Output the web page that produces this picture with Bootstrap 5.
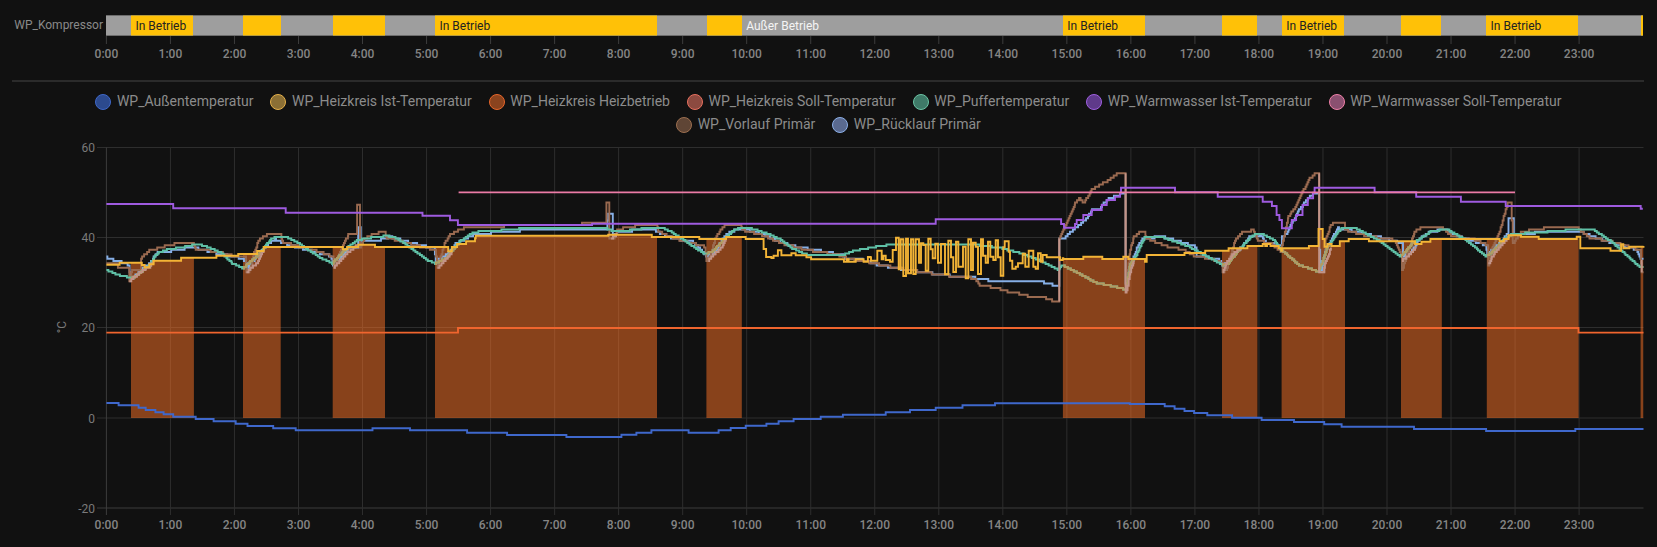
<!DOCTYPE html>
<html lang="de">
<head>
<meta charset="utf-8">
<title>WP Verlauf</title>
<link rel="stylesheet" href="https://cdn.jsdelivr.net/npm/bootstrap@5.3.0/dist/css/bootstrap.min.css">
<style>
html,body{background:#111;height:547px;overflow:hidden}
body{font-family:Roboto,"Liberation Sans",sans-serif;color:#8e8e8e}
.dash{padding-top:15px}
.tl-name{width:103px;font-size:12px;line-height:21px;color:#8a8a8a;white-space:nowrap}
.tl-track{margin-left:3.4px;width:1537.1px;height:21px;box-shadow:inset 0 0 0 1px #6a6a6a}
.seg{height:21px;font-size:12px;line-height:20px;padding-left:4.5px;overflow:hidden;white-space:nowrap;border-top:1px solid #7a7a7a;border-bottom:1px solid #7a7a7a}
.seg-on{background:#ffc107;color:#222;border-color:#b69a3a}
.seg-off{background:#9e9e9e;color:#f4f4f4;border-color:#6d6d6d}
.sep{margin:15px 13px 8px 12px;border:0;border-top:2px solid #2b2b2b;opacity:1}
.lg-box{margin:0 78px;column-gap:17px;height:46px}
.lg-key{height:23px;font-size:14px;line-height:23px;gap:5.5px;color:#8c8c8c;white-space:nowrap}
.lg-dot{width:16px;height:16px;border-radius:50%;border:1.5px solid;flex:none}
svg.plot{display:block}
svg text{font-family:Roboto,"Liberation Sans",sans-serif}
.xl{font-size:12px;font-weight:500;fill:#858585;text-anchor:middle}
.yl{font-size:12px;fill:#7a7a7a;text-anchor:end}
.gl{stroke:#2e2e2e;stroke-width:1}
.ax{stroke:#3d3d3d;stroke-width:1}
.sr{fill:none;stroke-width:1.9;stroke-linejoin:miter}
</style>
</head>
<body>
<div class="dash">
  <div class="d-flex align-items-center">
    <div class="tl-name text-end">WP_Kompressor</div>
    <div class="tl-track d-flex">
      <div class="seg seg-off" style="width:24.6px"></div>
      <div class="seg seg-on" style="width:62px">In Betrieb</div>
      <div class="seg seg-off" style="width:50.2px"></div>
      <div class="seg seg-on" style="width:37.8px"></div>
      <div class="seg seg-off" style="width:51.9px"></div>
      <div class="seg seg-on" style="width:52.6px"></div>
      <div class="seg seg-off" style="width:49.5px"></div>
      <div class="seg seg-on" style="width:221.8px">In Betrieb</div>
      <div class="seg seg-off" style="width:49.8px"></div>
      <div class="seg seg-on" style="width:35.2px"></div>
      <div class="seg seg-off" style="width:321.1px">Außer Betrieb</div>
      <div class="seg seg-on" style="width:82.2px">In Betrieb</div>
      <div class="seg seg-off" style="width:77.1px"></div>
      <div class="seg seg-on" style="width:35.2px"></div>
      <div class="seg seg-off" style="width:24.5px"></div>
      <div class="seg seg-on" style="width:62.5px">In Betrieb</div>
      <div class="seg seg-off" style="width:57.2px"></div>
      <div class="seg seg-on" style="width:39.8px"></div>
      <div class="seg seg-off" style="width:44.8px"></div>
      <div class="seg seg-on" style="width:92.3px">In Betrieb</div>
      <div class="seg seg-off" style="width:62.5px"></div>
      <div class="seg seg-on" style="width:2.5px;padding:0"></div>
    </div>
  </div>
  <svg id="tick" class="plot" width="1657" height="29" viewBox="0 36 1657 29"></svg>
  <hr class="sep">
  <div class="lg-box d-flex flex-wrap justify-content-center">
    <div class="lg-key d-flex align-items-center"><span class="lg-dot" style="background:#2c4a8e;border-color:#3f68c9"></span>WP_Außentemperatur</div>
    <div class="lg-key d-flex align-items-center"><span class="lg-dot" style="background:#8b6f35;border-color:#e5b04a"></span>WP_Heizkreis Ist-Temperatur</div>
    <div class="lg-key d-flex align-items-center"><span class="lg-dot" style="background:#8a431e;border-color:#e8662a"></span>WP_Heizkreis Heizbetrieb</div>
    <div class="lg-key d-flex align-items-center"><span class="lg-dot" style="background:#8c4a40;border-color:#e8705f"></span>WP_Heizkreis Soll-Temperatur</div>
    <div class="lg-key d-flex align-items-center"><span class="lg-dot" style="background:#3f7a68;border-color:#6bc4a5"></span>WP_Puffertemperatur</div>
    <div class="lg-key d-flex align-items-center"><span class="lg-dot" style="background:#5f3a8a;border-color:#9f5fe0"></span>WP_Warmwasser Ist-Temperatur</div>
    <div class="lg-key d-flex align-items-center"><span class="lg-dot" style="background:#8a5070;border-color:#f080a8"></span>WP_Warmwasser Soll-Temperatur</div>
    <div class="lg-key d-flex align-items-center"><span class="lg-dot" style="background:#5f4535;border-color:#9c6f50"></span>WP_Vorlauf Primär</div>
    <div class="lg-key d-flex align-items-center"><span class="lg-dot" style="background:#5a6a90;border-color:#8cb0e8"></span>WP_Rücklauf Primär</div>
  </div>
  <svg id="plot" class="plot" width="1657" height="411" viewBox="0 136 1657 411"></svg>
</div>
<script src="https://cdn.jsdelivr.net/npm/bootstrap@5.3.0/dist/js/bootstrap.bundle.min.js"></script>
<script>
const P={A:[0,2.8,170],B:[560,2.8,170],C:[1100,2.815,150],N:[870,3,225],Z:[1040,3,155],D:[0,2.8,370],E:[560,2.8,390],F:[1100,2.815,370]};
function pts(list){let o=[];for(let i=0;i<list.length;i+=2){const p=P[list[i]];list[i+1].trim().split(/\s+/).forEach(s=>{const [a,b]=s.split(',').map(Number);o.push([+(p[0]+a/p[1]).toFixed(1),+(p[2]+b/3).toFixed(1)])})}return o}
function step(p){let d='M'+p[0][0]+' '+p[0][1];for(let i=1;i<p.length;i++)d+='H'+p[i][0]+'V'+p[i][1];return d}
function stair(p,lv){let ly=Math.round(p[0][1]/lv)*lv,d='M'+p[0][0]+' '+ly;for(let i=1;i<p.length;i++){const a=p[i-1],b=p[i];if(b[0]<=a[0]+.5){ly=Math.round(b[1]/lv)*lv;d+='V'+ly;continue}
for(let x=a[0]+1;x<b[0];x+=1){const y=a[1]+(b[1]-a[1])*(x-a[0])/(b[0]-a[0]),r=Math.round(y/lv)*lv;if(r!==ly){d+='H'+x.toFixed(1)+'V'+r;ly=r}}
const r=Math.round(b[1]/lv)*lv;d+='H'+b[0];if(r!==ly){d+='V'+r;ly=r}}return d}

const yellow=pts(['A','298,284 335,278 397,285 405,292 418,283 430,272 507,263 606,257 667,252 720,243 738,231 960,238 972,231 1003,224 1050,231 1255,244 1265,231 1280,222 1305,214 1330,205 1332,197 1568,197',
'B','135,194 257,201 390,207 465,201 520,207 570,237 577,261 592,264 598,257 610,241 620,256 648,250 660,256 690,262 703,268 795,275 803,268 808,275 828,268 850,275 862,261',
'N','0,97 3,97 3,107 22,107 22,77 35,77 35,103 40,103 40,92 47,92 47,105 60,105 60,110 68,110 68,75 78,75 78,38 86,38 86,133 92,133 92,43 100,43 100,153 108,153 108,41 114,41 114,145 123,145 123,43 130,43 130,147 137,147 137,43 147,43 147,113 153,113 153,55 160,55 160,60 167,60 167,137 175,137 175,41 182,41 182,73 188,73 188,100 196,100 196,56 204,56 204,113 213,113 213,57 225,57 225,148 235,148 235,47 243,47 243,97 250,97 250,141 258,141 258,50 265,50 265,125 279,125 279,65 287,65 287,160 295,160 295,43 303,43 303,135 309,135 309,53 317,53 317,65 324,65 324,147 333,147 333,43 339,43 339,92 347,92 347,113 354,113 354,50 361,50 361,95 370,95 370,105 377,105 377,46 384,46 384,97 392,97 392,152 400,152 400,67 404,67 404,49 416,49 416,80 420,80 420,107 427,107 427,131 437,131 437,125 444,125 444,115 458,115 458,86 466,86 466,125 476,125 476,77 490,77 490,125 497,125 497,131 504,131 504,85 512,85 512,110 518,110 518,90 530,90 530,97 570,97 570,105 578,105 578,100',
'Z','70,312 130,305 187,312 250,305 265,312 315,320 320,300',
'C','238,309 296,302 362,295 415,288 458,282 465,288 470,282 480,288 503,295 510,302 512,295 588,288 615,237 627,267 632,290 640,282 652,288 675,274 700,267 757,274 887,282 905,275 930,267 1125,274 1137,267 1150,256 1185,260 1235,267 1315,267 1342,260 1352,295 1437,302 1467,283 1473,295 1490,290 1530,288']);

const green=pts(['A','298,300 330,315 360,322 375,322 395,305 410,292 420,285 432,260 445,247 470,238 510,232 545,224 560,224 590,235 620,249 650,280 680,295 695,280 720,258 745,225 760,205 790,199 810,205 840,222 870,245 900,265 930,280 945,262 970,235 985,222 1000,210 1040,203 1085,197 1110,205 1135,222 1170,250 1195,270 1218,280 1235,272 1250,262 1270,235 1290,212 1320,190 1345,183 1420,180 1470,174',
'B','0,172 70,172 130,176 150,183 165,185 200,180 260,172 285,172 310,185 340,205 370,228 405,252 425,245 440,230 465,200 490,178 515,172 545,178 590,195 620,210 650,235 680,250 700,255 790,255 820,243 860,235 900,227 940,223 1000,223 1060,223 1170,225 1230,233 1290,250 1340,270 1395,300 1405,285 1460,315 1500,338',
'C','40,410 72,418 85,340 100,320 125,262 175,262 250,290 345,345 360,340 390,300 430,255 450,250 490,270 510,300 560,345 615,365 640,290 680,232 720,235 790,275 845,320 880,280 930,245 975,237 1030,270 1085,318 1100,310 1140,265 1160,252 1240,247 1340,238 1390,240 1440,275 1520,352 1530,352']);

const brown=pts(['A','298,278 330,278 330,292 362,292 362,335 370,300 395,300 395,265 415,243 450,232 480,224 515,217 540,217 548,238 610,245 640,255 680,262 686,262 690,308 700,300 712,245 725,210 750,192 785,192 790,215 850,233 895,245 925,258 931,258 935,293 960,225 975,195 1000,195 1000,102 1008,102 1008,235 1020,207 1035,197 1062,187 1078,187 1080,202 1140,220 1170,228 1218,240 1225,293 1245,220 1260,195 1285,180 1305,172 1420,168',
'B','0,165 90,160 130,160 130,100 138,100 138,205 150,205 160,180 185,172 230,165 270,165 275,182 290,192 320,205 370,220 405,230 410,270 420,258 435,205 455,170 475,163 505,165 510,180 560,193 620,220 680,238 740,248 790,258 810,268 860,275 900,285 950,295 1010,305 1070,315 1160,325 1175,345 1225,355 1255,365 1290,372 1315,380 1350,380 1385,395 1398,395 1398,205 1410,177 1430,130 1442,100 1455,85 1465,100 1480,75 1490,58 1520,40',
'C','10,100 30,85 50,70 70,70 72,70 72,410 85,300 95,262 110,248 125,246 130,265 165,280 190,290 230,298 270,320 310,325 345,340 345,365 355,360 380,270 400,248 430,240 445,272 480,280 510,305 512,285 530,200 550,170 570,125 590,85 610,68 617,68 617,370 630,365 635,265 650,225 665,215 687,215 690,240 750,258 830,270 850,320 850,360 885,245 905,232 960,232 990,258 1060,270 1090,285 1093,345 1105,290 1125,245 1148,155 1156,155 1162,280 1185,245 1230,238 1285,230 1345,235 1375,262 1440,275 1520,300 1525,370 1530,370']);

const lblue=pts(['A','298,262 312,268 335,275 360,285 365,330 400,295 420,280 430,262 443,247 500,240 530,232 550,235 600,248 660,262 680,265 695,290 710,270 725,250 745,225 770,208 790,218 820,228 925,258 932,285 960,255 975,232 1003,232 1003,172 1010,172 1010,210 1050,215 1090,200 1140,215 1165,222 1215,235 1220,270 1250,255 1275,222 1305,205 1330,192 1380,188 1500,178',
'B','0,178 130,178 135,128 145,128 148,200 160,187 215,180 260,178 280,190 320,207 370,213 410,258 430,250 460,200 480,183 515,178 560,190 620,218 660,230 700,237 790,255 800,265 850,270 890,285 960,298 1040,310 1080,316 1160,323 1200,331 1330,331 1365,340 1395,350 1398,350 1398,208 1410,208 1425,190 1445,172 1470,150 1490,120',
'C','0,175 10,160 25,145 60,132 72,132 72,400 80,360 95,320 105,290 120,265 175,260 225,275 270,290 272,320 330,325 345,345 355,340 390,300 400,290 420,262 450,255 470,280 510,285 512,262 525,250 540,220 560,180 585,145 605,128 617,128 617,300 622,360 635,300 650,270 670,235 700,240 760,255 800,265 850,280 853,320 880,300 900,265 930,245 970,238 1010,260 1085,285 1090,310 1125,280 1148,250 1150,205 1162,205 1165,255 1240,247 1350,245 1400,265 1460,285 1510,298 1522,325 1530,325']);

const pale=[
['A','362,335 375,322 390,310 405,297 418,290 430,275'],['A','690,308 700,295 720,280 738,240'],['A','935,293 950,275 970,250 1000,225'],['A','1225,295 1245,272 1265,245'],
['B','415,270 430,255 450,235 465,205'],['B','143,208 160,190'],['B','1398,395 1398,205'],
['C','72,70 72,430 78,405 85,365 95,335'],['C','345,365 355,340 375,310 395,295'],['C','617,68 617,370 628,370 633,340 650,295'],['C','850,330 870,315 890,290'],['C','1093,343 1103,320 1125,290 1150,262'],['C','1523,330 1525,370']
].map(pts);

const purple=pts(['A','298,102 485,115 800,128 1183,137 1260,151 1282,165',
'B','90,161 1052,148 1403,162',
'Z','72,218 105,207 110,195 130,180 155,165 185,150 200,135 225,125 240,115 243,98 405,112 533,125',
'C','458,155 484,168 497,195 505,210 512,235 530,235 540,210 552,195 570,165 585,145 600,128 604,113 773,127 890,140 1016,155 1142,168 1522,176 1528,176']);
const redp=[[106.4,332.6],[458,328],[1578.5,332.6],[1643.5,332.6]];
const outd=pts(['D','298,99 332,106 388,113 408,120 435,127 458,133 485,140 548,147 598,154 660,161 693,168 765,175 828,181 1043,175 1148,181 1308,188 1420,195',
'E','18,141 172,134 214,128 256,121 360,128 444,121 478,114 520,107 578,101 612,94 654,87 730,80 792,74 912,67 980,60 1052,53 1127,46 1218,40',
'F','84,102 182,109 210,116 238,123 265,129 302,136 372,143 455,150 546,156 631,163 680,170 884,177 1087,183 1338,177 1530,177']);

const X0=106.4,HW=64.03,xs=[...Array(24).keys()].map(h=>X0+h*HW);
let t='';
xs.forEach((x,h)=>{t+=`<line class="ax" x1="${x}" x2="${x}" y1="36" y2="44"/><text class="xl" x="${x}" y="58">${h}:00</text>`});
document.getElementById('tick').innerHTML=t;

const intervals=[[131,193.9],[243,280.7],[332.7,385],[435,657],[706.4,741.8],[1062.9,1145],[1222,1257.4],[1281.6,1345],[1401,1441.8],[1486.8,1578.6],[1640.6,1643.5]];
const ys=[[60,147.5],[40,237.5],[20,327.5],[0,418],[-20,508]];
const yd=step(yellow),areaD=yd+'V418H106.4Z';
let s='<defs><clipPath id="on">'+intervals.map(i=>`<rect x="${i[0]}" y="140" width="${i[1]-i[0]}" height="278"/>`).join('')+`</clipPath><clipPath id="ar" clip-path="url(#on)"><path d="${areaD}"/></clipPath></defs>`;
ys.forEach(y=>{s+=`<line class="${y[0]==-20?'ax':'gl'}" x1="97" x2="1643.5" y1="${y[1]}" y2="${y[1]}"/><text class="yl" x="95" y="${y[1]+4.5}">${y[0]}</text>`});
xs.forEach((x,h)=>{s+=`<line class="${h==0?'ax':'gl'}" x1="${x}" x2="${x}" y1="147.5" y2="515"/><text class="xl" x="${x}" y="529">${h}:00</text>`});
s+=`<text class="yl" style="text-anchor:middle" transform="translate(66,327) rotate(-90)">°C</text>`;
s+=`<path d="${areaD}" fill="rgba(255,115,37,.5)" clip-path="url(#on)"/>`;
s+=`<path class="sr" stroke="#86afe6" d="${stair(lblue,2.25)}"/>`;
s+=`<path class="sr" stroke="#9a6a50" d="${stair(brown,2.25)}"/>`;
s+=`<path class="sr" stroke="#5fc0a6" d="${stair(green,1.5)}"/>`;
s+=`<g clip-path="url(#ar)"><path class="sr" stroke="#b39c62" d="${stair(green,1.5)}"/></g>`;
pale.forEach(p=>{s+=`<path class="sr" stroke="#c39488" d="${stair(p,2.25)}"/>`});
s+=`<path class="sr" stroke="#9f5be0" d="${step(purple)}"/>`;
s+=`<path class="sr" stroke="#ec7ba6" d="M458.6 192.4H1515"/>`;
s+=`<path class="sr" stroke="#f0652e" d="${step(redp)}"/>`;
s+=`<path class="sr" stroke="#f3b436" d="${yd}"/>`;
s+=`<path class="sr" stroke="#3f68cc" d="${step(outd)}"/>`;
document.getElementById('plot').innerHTML=s;
</script>
</body>
</html>
